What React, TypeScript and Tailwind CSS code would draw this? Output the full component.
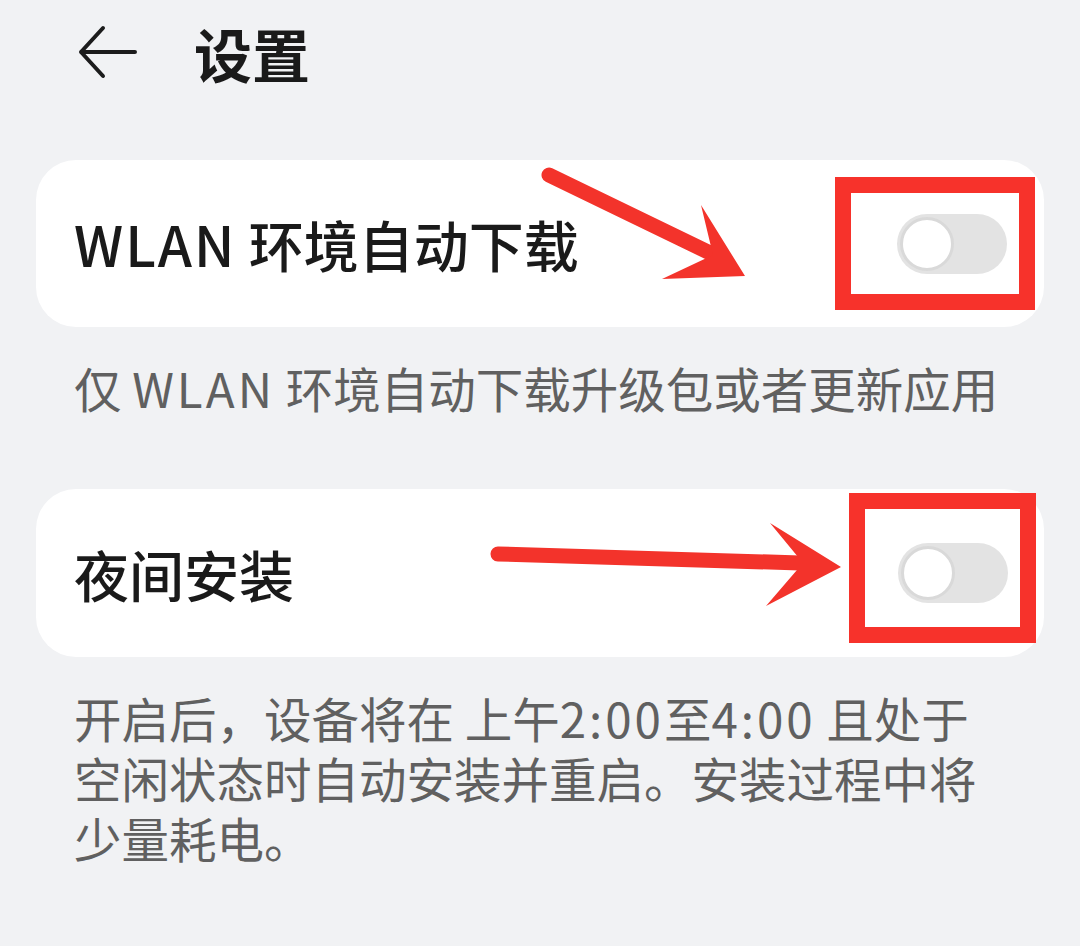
import React from "react";

function Toggle({ box }: { box: string }) {
  return (
    <div className="relative">
      <div className="w-[110px] h-[60px] rounded-full bg-[#e3e3e3] flex items-center pl-[3px]">
        <div className="w-[54px] h-[54px] rounded-full bg-white border-[3px] border-[#d9d9d9]" />
      </div>
      <div className={box} />
    </div>
  );
}

export default function App() {
  return (
    <div
      className="relative w-[1080px] h-[946px] bg-[#f1f2f4] overflow-hidden"
      style={{ fontFamily: '"Noto Sans CJK SC", "Noto Sans", sans-serif' }}
    >
      <div className="h-[106px] flex items-center pl-[78px]">
        <svg width="60" height="56" viewBox="0 0 60 56" fill="none">
          <path d="M57 27 H3 M25 3 L3 27 L25 51" stroke="#1c1c1c" strokeWidth="4" strokeLinecap="round" strokeLinejoin="round" />
        </svg>
        <div className="ml-[56px] text-[58px] leading-none font-bold text-[#1a1a1a]">设置</div>
      </div>

      <div className="mt-[54px] mx-[36px] h-[167px] rounded-[40px] bg-white flex items-center justify-between pl-[38px] pr-[37px]">
        <div className="text-[55px] leading-none font-medium text-[#1a1a1a] whitespace-nowrap">
          <span className="tracking-[2px]">WLAN</span> 环境自动下载
        </div>
        <Toggle box="absolute left-[-62px] right-[-28px] top-[-37px] bottom-[-36px] border-[16px] border-[#f7322b]" />
      </div>

      <div className="mt-[31px] px-[74px] text-[47.5px] leading-[60px] text-[#606060] whitespace-nowrap">
        仅 <span className="tracking-[3px]">WLAN</span> 环境自动下载升级包或者更新应用
      </div>

      <div className="mt-[71px] mx-[36px] h-[168px] rounded-[40px] bg-white flex items-center justify-between pl-[38px] pr-[36px]">
        <div className="text-[55px] leading-none font-medium text-[#1a1a1a] whitespace-nowrap">夜间安装</div>
        <Toggle box="absolute left-[-49px] right-[-28px] top-[-50px] bottom-[-40px] border-[16px] border-[#f7322b]" />
      </div>

      <div className="mt-[31px] px-[74px] text-[47.5px] leading-[60px] text-[#606060] whitespace-nowrap">
        <div>
          开启后，设备将在 上午<span className="tracking-[3px]">2:00</span>至<span className="tracking-[3px]">4:00</span> 且处于
        </div>
        <div>空闲状态时自动安装并重启。安装过程中将</div>
        <div>少量耗电。</div>
      </div>

      <svg className="absolute left-0 top-0 pointer-events-none" width="1080" height="946" viewBox="0 0 1080 946">
        <line x1="549" y1="175" x2="708" y2="252" stroke="#f3332b" strokeWidth="15" strokeLinecap="round" />
        <polygon points="745,276 701,205 713,255 662,279" fill="#f3332b" />
        <line x1="498" y1="554" x2="800" y2="563" stroke="#f3332b" strokeWidth="15" strokeLinecap="round" />
        <polygon points="841,567 770,523 803,563 766,606" fill="#f3332b" />
      </svg>
    </div>
  );
}
